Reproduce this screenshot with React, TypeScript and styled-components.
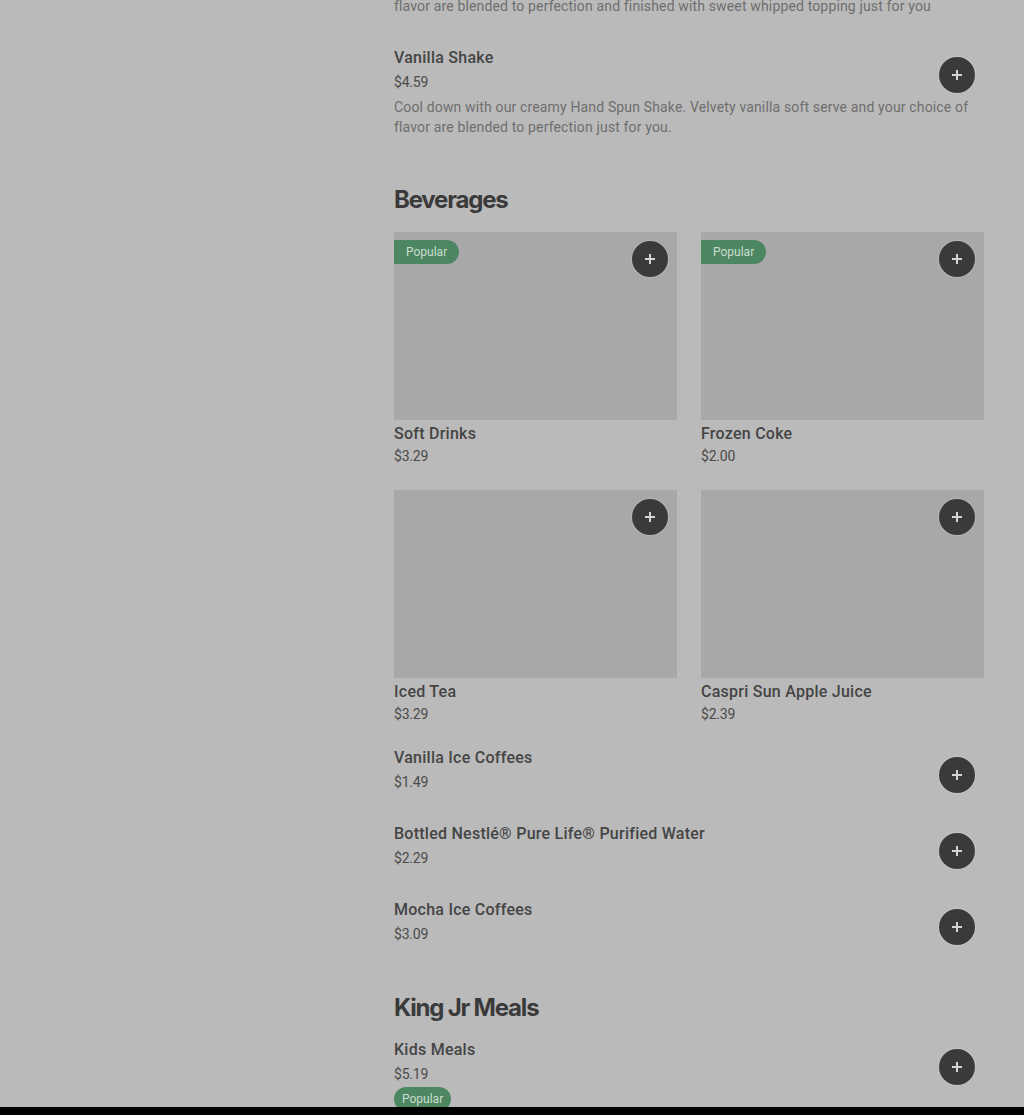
import React from "react";
import styled, { createGlobalStyle } from "styled-components";

const Global = createGlobalStyle`
  html, body { margin: 0; padding: 0; background: #bababa; }
  body { font-family: Roboto, "Liberation Sans", sans-serif; color: #3a3a3a; }
  * { box-sizing: border-box; }
`;

const Page = styled.div`
  display: grid;
  grid-template-columns: 394px 590px;
  min-height: 1115px;
  overflow: hidden;
`;

const Sidebar = styled.aside``;

const Content = styled.main`
  display: flex;
  flex-direction: column;
  gap: 47px;
  margin-top: -9px;
`;

const Section = styled.section<{ $push?: number }>`
  display: flex;
  flex-direction: column;
  margin-top: ${(p) => p.$push ?? 0}px;
`;

const Heading = styled.h2`
  margin: 0 0 16px;
  font-family: Inter, Roboto, sans-serif;
  font-size: 24px;
  line-height: 32px;
  font-weight: 700;
  letter-spacing: -1.2px;
  color: #3a3a3a;
`;

const List = styled.div`
  display: flex;
  flex-direction: column;
  gap: 32px;
`;

const Item = styled.div`
  display: grid;
  grid-template-columns: 1fr 36px;
  align-items: start;
  column-gap: 12px;
  padding-right: 9px;
`;

const ItemText = styled.div`
  display: flex;
  flex-direction: column;
`;

const Title = styled.div`
  font-size: 16px;
  line-height: 20px;
  font-weight: 500;
  letter-spacing: 0.25px;
  color: #454545;
`;

const Price = styled.div<{ $gap?: number }>`
  margin-top: ${(p) => p.$gap ?? 4}px;
  font-size: 14px;
  line-height: 20px;
  letter-spacing: -0.2px;
  color: #4a4a4a;
`;

const Desc = styled.p`
  grid-column: 1 / -1;
  margin: 5px -9px 0 0;
  font-size: 14px;
  line-height: 20px;
  letter-spacing: 0.15px;
  color: #6e6e6e;
`;

const AddButton = styled.button<{ $over?: boolean }>`
  width: 36px;
  height: 36px;
  border-radius: 50%;
  border: none;
  padding: 0;
  background: #3a3a3a;
  display: flex;
  align-items: center;
  justify-content: center;
  box-shadow: 0 0 0 1px rgba(255, 255, 255, 0.15);
  margin: 9px 0 -10px;
  ${(p) =>
    p.$over &&
    `position: absolute; top: 9px; right: 9px; margin: 0;`}
`;

const Grid = styled.div`
  display: grid;
  grid-template-columns: 1fr 1fr;
  gap: 24px;
  margin-bottom: 24px;
`;

const Card = styled.div`
  display: flex;
  flex-direction: column;
`;

const Thumb = styled.div`
  position: relative;
  height: 188px;
  background: #a8a8a8;
  margin-bottom: 4px;
`;

const Badge = styled.span<{ $over?: boolean }>`
  display: inline-flex;
  align-items: center;
  height: 24px;
  padding: 0 12px;
  background: #4d8762;
  color: #c9dccf;
  font-size: 12px;
  border-radius: 12px;
  ${(p) =>
    p.$over
      ? `position: absolute; top: 8px; left: 0; border-radius: 0 12px 12px 0;`
      : `align-self: flex-start; margin-top: 3px; padding: 0 8px;`}
`;

const BottomBar = styled.div`
  position: fixed;
  left: 0;
  right: 0;
  bottom: 0;
  height: 8px;
  background: #000;
`;

const Plus = () => (
  <svg width="12" height="12" viewBox="0 0 12 12">
    <path d="M6 1v10M1 6h10" stroke="#d4d4d4" strokeWidth="2" />
  </svg>
);

type ListItem = { title: string; price: string; desc?: string; popular?: boolean };
type CardItem = { title: string; price: string; popular?: boolean };

const Row = ({ item }: { item: ListItem }) => (
  <Item>
    <ItemText>
      <Title>{item.title}</Title>
      <Price>{item.price}</Price>
      {item.popular && <Badge>Popular</Badge>}
    </ItemText>
    <AddButton aria-label="Add">
      <Plus />
    </AddButton>
    {item.desc && <Desc>{item.desc}</Desc>}
  </Item>
);

const Tile = ({ item }: { item: CardItem }) => (
  <Card>
    <Thumb>
      {item.popular && <Badge $over>Popular</Badge>}
      <AddButton $over aria-label="Add">
        <Plus />
      </AddButton>
    </Thumb>
    <Title>{item.title}</Title>
    <Price $gap={2}>{item.price}</Price>
  </Card>
);

const cards: CardItem[] = [
  { title: "Soft Drinks", price: "$3.29", popular: true },
  { title: "Frozen Coke", price: "$2.00", popular: true },
  { title: "Iced Tea", price: "$3.29" },
  { title: "Caspri Sun Apple Juice", price: "$2.39" },
];

const beverages: ListItem[] = [
  { title: "Vanilla Ice Coffees", price: "$1.49" },
  { title: "Bottled Nestlé® Pure Life® Purified Water", price: "$2.29" },
  { title: "Mocha Ice Coffees", price: "$3.09" },
];

export default function App() {
  return (
    <>
      <Global />
      <Page>
        <Sidebar />
        <Content>
          <Section>
            <List>
              <Desc>
                flavor are blended to perfection and finished with sweet whipped topping just for you
              </Desc>
              <Row
                item={{
                  title: "Vanilla Shake",
                  price: "$4.59",
                  desc:
                    "Cool down with our creamy Hand Spun Shake. Velvety vanilla soft serve and your choice of flavor are blended to perfection just for you.",
                }}
              />
            </List>
          </Section>
          <Section>
            <Heading>Beverages</Heading>
            <Grid>
              {cards.map((c) => (
                <Tile key={c.title} item={c} />
              ))}
            </Grid>
            <List>
              {beverages.map((b) => (
                <Row key={b.title} item={b} />
              ))}
            </List>
          </Section>
          <Section $push={1}>
            <Heading>King Jr Meals</Heading>
            <List>
              <Row item={{ title: "Kids Meals", price: "$5.19", popular: true }} />
            </List>
          </Section>
        </Content>
      </Page>
      <BottomBar />
    </>
  );
}
